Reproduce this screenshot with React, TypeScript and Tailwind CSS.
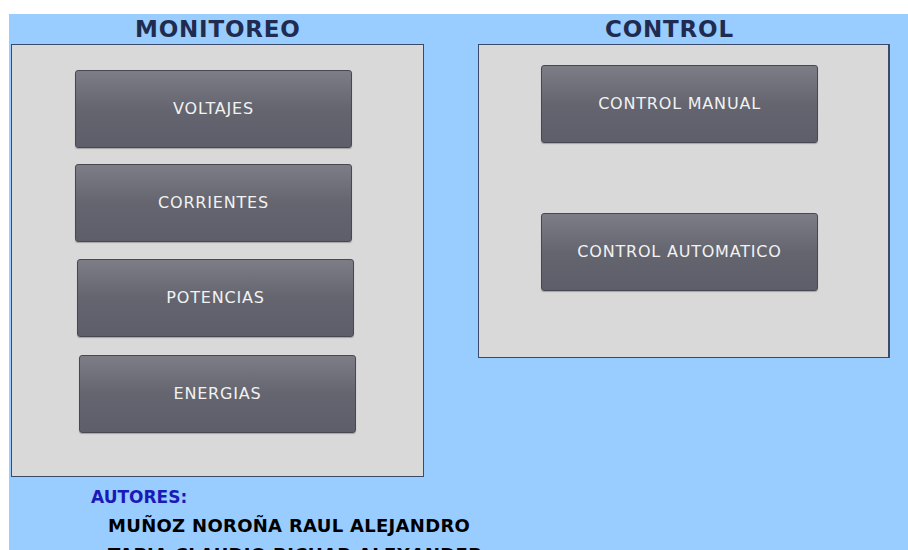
const monitoreo = [
  { label: 'VOLTAJES', cls: 'ml-[63px] mt-[25px]' },
  { label: 'CORRIENTES', cls: 'ml-[63px] mt-[16px]' },
  { label: 'POTENCIAS', cls: 'ml-[65px] mt-[17px]' },
  { label: 'ENERGIAS', cls: 'ml-[67px] mt-[18px]' },
];

const control = [
  { label: 'CONTROL MANUAL', cls: 'mt-[20px]' },
  { label: 'CONTROL AUTOMATICO', cls: 'mt-[70px]' },
];

function HmiButton({ label, className }: { label: string; className?: string }) {
  return (
    <button
      className={`w-[277px] h-[78px] flex items-center justify-center rounded-[3px] border border-[#474852] bg-gradient-to-b from-[#7c7d87] via-[#64656f] to-[#5d5e69] text-[#f2f2f2] text-[16px] tracking-[0.8px] shadow-[0_1px_1px_rgba(0,0,0,0.25)] ${className ?? ''}`}
    >
      {label}
    </button>
  );
}

export default function App() {
  return (
    <div className="w-[908px] h-[550px] bg-white pt-[14px] pl-[9px] overflow-hidden font-['DejaVu_Sans',sans-serif]">
      <div className="h-full bg-[#99ccff] flex flex-col">
        <div className="flex">
          {/* Monitoreo */}
          <div className="ml-[2px] flex flex-col">
            <div className="h-[30px] flex items-center pl-[124px] text-[23px] font-bold tracking-[0.8px] text-[#1f2c50] leading-none">
              MONITOREO
            </div>
            <div className="w-[413px] h-[433px] bg-[#d9d9d9] border border-[#3b4a68] flex flex-col">
              {monitoreo.map((b) => (
                <HmiButton key={b.label} label={b.label} className={b.cls} />
              ))}
            </div>
          </div>

          {/* Control */}
          <div className="ml-[54px] flex flex-col">
            <div className="h-[30px] flex items-center pl-[127px] text-[23px] font-bold tracking-[0.8px] text-[#1f2c50] leading-none">
              CONTROL
            </div>
            <div className="w-[412px] h-[314px] bg-[#d9d9d9] border border-r-2 border-[#3b4a68] flex flex-col pl-[62px]">
              {control.map((b) => (
                <HmiButton key={b.label} label={b.label} className={b.cls} />
              ))}
            </div>
          </div>
        </div>

        {/* Autores */}
        <div className="pl-[82px] mt-[9px] text-[17px] font-bold text-[#1a1ab8] leading-[22px]">AUTORES:</div>
        <div className="pl-[99px] mt-[3px] text-[18px] font-bold text-black leading-[29px] tracking-[0.3px]">
          <div>MUÑOZ NOROÑA RAUL ALEJANDRO</div>
          <div>TAPIA CLAUDIO RICHAR ALEXANDER</div>
        </div>
      </div>
    </div>
  );
}
